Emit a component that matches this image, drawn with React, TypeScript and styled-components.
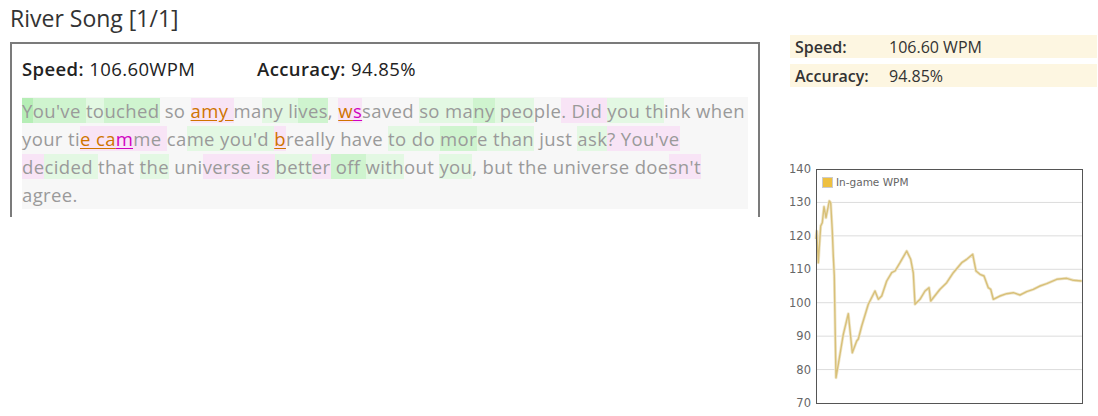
import styled, { createGlobalStyle } from "styled-components";

const GlobalStyle = createGlobalStyle`
  body {
    margin: 0;
    background: #fff;
    font-family: "Open Sans", "Noto Sans", sans-serif;
  }
`;

const Page = styled.div`
  display: flex;
  gap: 30px;
  padding: 0 0 0 10px;
  width: 1098px;
  box-sizing: border-box;
`;

export default function App() {
  return (
    <>
      <GlobalStyle />
      <Page>
        <ResultColumn />
        <SideColumn />
      </Page>
    </>
  );
}

// Left side: title and the typed text
const StyledResultColumn = styled.div`
  width: 750px;
  flex-shrink: 0;
`;
const Title = styled.h1`
  margin: 0;
  padding-top: 2px;
  height: 42px;
  box-sizing: border-box;
  font-size: 23px;
  line-height: 32px;
  font-weight: 400;
  color: #333;
`;
const ResultBox = styled.div`
  border: 2px solid #7b7b7b;
  border-bottom: none;
  padding: 0 10px 8px 10px;
`;
const Summary = styled.div`
  display: flex;
  height: 48px;
  margin-bottom: 5px;
  align-items: center;
  font-size: 18.5px;
  letter-spacing: 0.4px;
  color: #222;

  & > span {
    width: 235px;
  }
  & b {
    font-weight: 600;
  }
`;

function ResultColumn() {
  return (
    <StyledResultColumn>
      <Title>River Song [1/1]</Title>
      <ResultBox>
        <Summary>
          <span>
            <b>Speed:</b> 106.60WPM
          </span>
          <span>
            <b>Accuracy:</b> 94.85%
          </span>
        </Summary>
        <TypedText />
      </ResultBox>
    </StyledResultColumn>
  );
}

// Typed text with per-character timing highlights
type Tone = "" | "g1" | "g2" | "g3" | "p1" | "p2" | "err" | "miss";
const toneBg: Record<string, string> = {
  g1: "#e3f8e3",
  g2: "#cff4cf",
  g3: "#b6eeb6",
  p1: "#f8e4f6",
  p2: "#f2d9f0",
  err: "#f8e4f6",
  miss: "#f8e4f6",
};

const TextArea = styled.div`
  background: #f7f7f7;
  font-size: 18.5px;
  line-height: 28px;
  color: #9a9a9a;
  letter-spacing: 0.37px;
`;
const Line = styled.div`
  white-space: pre;
`;
const Chunk = styled.span<{ $tone: Tone }>`
  background: ${(p) => toneBg[p.$tone] || "transparent"};
  color: ${(p) =>
    p.$tone === "err" ? "#cf7400" : p.$tone === "miss" ? "#d000c0" : "inherit"};
  text-decoration: ${(p) =>
    p.$tone === "err" || p.$tone === "miss" ? "underline" : "none"};
  text-underline-offset: 2px;
`;

const lines: [string, Tone][][] = [
  [
    ["Y", "g3"],
    ["ou've ", "g2"],
    ["to", "g1"],
    ["uched", "g2"],
    [" so ", ""],
    ["amy ", "err"],
    ["ma", ""],
    ["ny li", "g1"],
    ["ves", "g2"],
    [", ", ""],
    ["w", "err"],
    ["s", "miss"],
    ["saved ", ""],
    ["so ", "g1"],
    ["ma", "g1"],
    ["ny", "g2"],
    [" peo", "g1"],
    ["ple", ""],
    [". Did ", "p1"],
    ["you", "g1"],
    [" th", "g1"],
    ["ink when", ""],
  ],
  [
    ["your ti", ""],
    ["e ca", "err"],
    ["m", "miss"],
    ["me ", "p1"],
    ["ca", ""],
    ["me ", "g1"],
    ["you'd ", "g1"],
    ["b", "err"],
    ["really ", ""],
    ["have ", ""],
    ["to do ", "g1"],
    ["mor", "g2"],
    ["e", "g1"],
    [" than", "g1"],
    [" just ", ""],
    ["ask", "g1"],
    ["? You've", "p1"],
  ],
  [
    ["de", "p1"],
    ["cided ", "g1"],
    ["that ", ""],
    ["the", "g1"],
    [" uni", ""],
    ["verse ", "p1"],
    ["is ", "p1"],
    ["bett", "g1"],
    ["er", "p1"],
    [" off ", "g2"],
    ["with", "g1"],
    ["out ", ""],
    ["you", "g1"],
    [", but the universe doe", ""],
    ["sn't", "p1"],
  ],
  [["agree.", ""]],
];

function TypedText() {
  return (
    <TextArea>
      {lines.map((line, i) => (
        <Line key={i}>
          {line.map(([text, tone], j) => (
            <Chunk key={j} $tone={tone}>
              {text}
            </Chunk>
          ))}
        </Line>
      ))}
    </TextArea>
  );
}

// Right side: stats table and WPM chart
const StyledSideColumn = styled.div`
  width: 307px;
  padding-top: 35px;
`;
const StatRow = styled.div`
  display: flex;
  align-items: center;
  height: 23px;
  margin-bottom: 6px;
  padding-left: 5px;
  background: #fdf6e1;
  font-size: 16px;
  color: #333;

  & > b {
    width: 94px;
    font-weight: 600;
  }
`;
const ChartWrap = styled.div`
  margin-top: 72px;

  & svg {
    display: block;
    font-family: "DejaVu Sans", Verdana, sans-serif;
  }
`;

function SideColumn() {
  return (
    <StyledSideColumn>
      <StatRow>
        <b>Speed:</b>106.60 WPM
      </StatRow>
      <StatRow>
        <b>Accuracy:</b>94.85%
      </StatRow>
      <ChartWrap>
        <WpmChart />
      </ChartWrap>
    </StyledSideColumn>
  );
}

// chart points, in page pixels (plot box is 816..1082 x 168..402)
const points: [number, number][] = [
  [816, 238], [816.7, 230], [818.3, 261.7], [820.7, 225], [822.3, 221.7],
  [824, 205.7], [826, 216.7], [829.3, 200], [830.7, 201.7], [832.3, 230],
  [833.3, 255], [834.3, 275], [835.3, 336.7], [836, 376.7], [838.3, 363.3],
  [843.3, 333.3], [848.3, 312.7], [852.3, 351.7], [856.7, 340], [858.3, 338],
  [861.7, 325], [868.3, 303.3], [875, 290], [878.3, 298.3], [881.7, 295],
  [886.7, 280], [891.7, 271.7], [895, 270], [900, 261.7], [906.7, 250],
  [910.7, 258.3], [913.3, 272], [915, 303.3], [920, 298.3], [925, 290],
  [929, 286.7], [930.7, 300], [933.3, 296.7], [940, 288.3], [946.7, 281.7],
  [953.3, 271.7], [961.7, 261.7], [966.7, 258.3], [972.7, 253.3], [976, 270],
  [980, 273.3], [984, 275], [988.3, 286.7], [990.7, 288.3], [993.3, 298.3],
  [1000, 295], [1006.7, 292.7], [1013.3, 291.7], [1020, 294], [1026.7, 290.7],
  [1033.3, 288.3], [1040, 285], [1046.7, 282.7], [1056.7, 278.3],
  [1066.7, 277.3], [1073.3, 279.3], [1081.7, 280],
];
const ticks = [140, 130, 120, 110, 100, 90, 80, 70];

function WpmChart() {
  // svg origin sits at page (790, 158)
  const ox = 790;
  const oy = 158;
  const left = 26;
  const top = 10;
  const w = 266;
  const h = 234;
  const path = points
    .map(([x, y], i) => `${i ? "L" : "M"}${(x - ox).toFixed(1)},${(y - oy).toFixed(1)}`)
    .join(" ");
  return (
    <svg width="307" height="256" viewBox="0 0 307 256">
      {ticks.map((t, i) => {
        const y = top + (i * h) / 7;
        return (
          <g key={t}>
            {i > 0 && i < 7 && (
              <line x1={left} x2={left + w} y1={y} y2={y} stroke="#dcdcdc" />
            )}
            <text x={left - 5} y={y + 4} fontSize="11.5" fill="#666" textAnchor="end">
              {t}
            </text>
          </g>
        );
      })}
      <path d={path} fill="none" stroke="#efe6cc" strokeWidth="3" strokeLinejoin="round" />
      <path d={path} fill="none" stroke="#d8c078" strokeWidth="1.4" strokeLinejoin="round" />
      <rect x={left + 0.5} y={top + 0.5} width={w} height={h} fill="none" stroke="#555" />
      <rect x={32.5} y={18.5} width={10} height={10} fill="#eec040" stroke="#ccc" />
      <text x={46} y={27} fontSize="10.5" fill="#666">
        In-game WPM
      </text>
    </svg>
  );
}
